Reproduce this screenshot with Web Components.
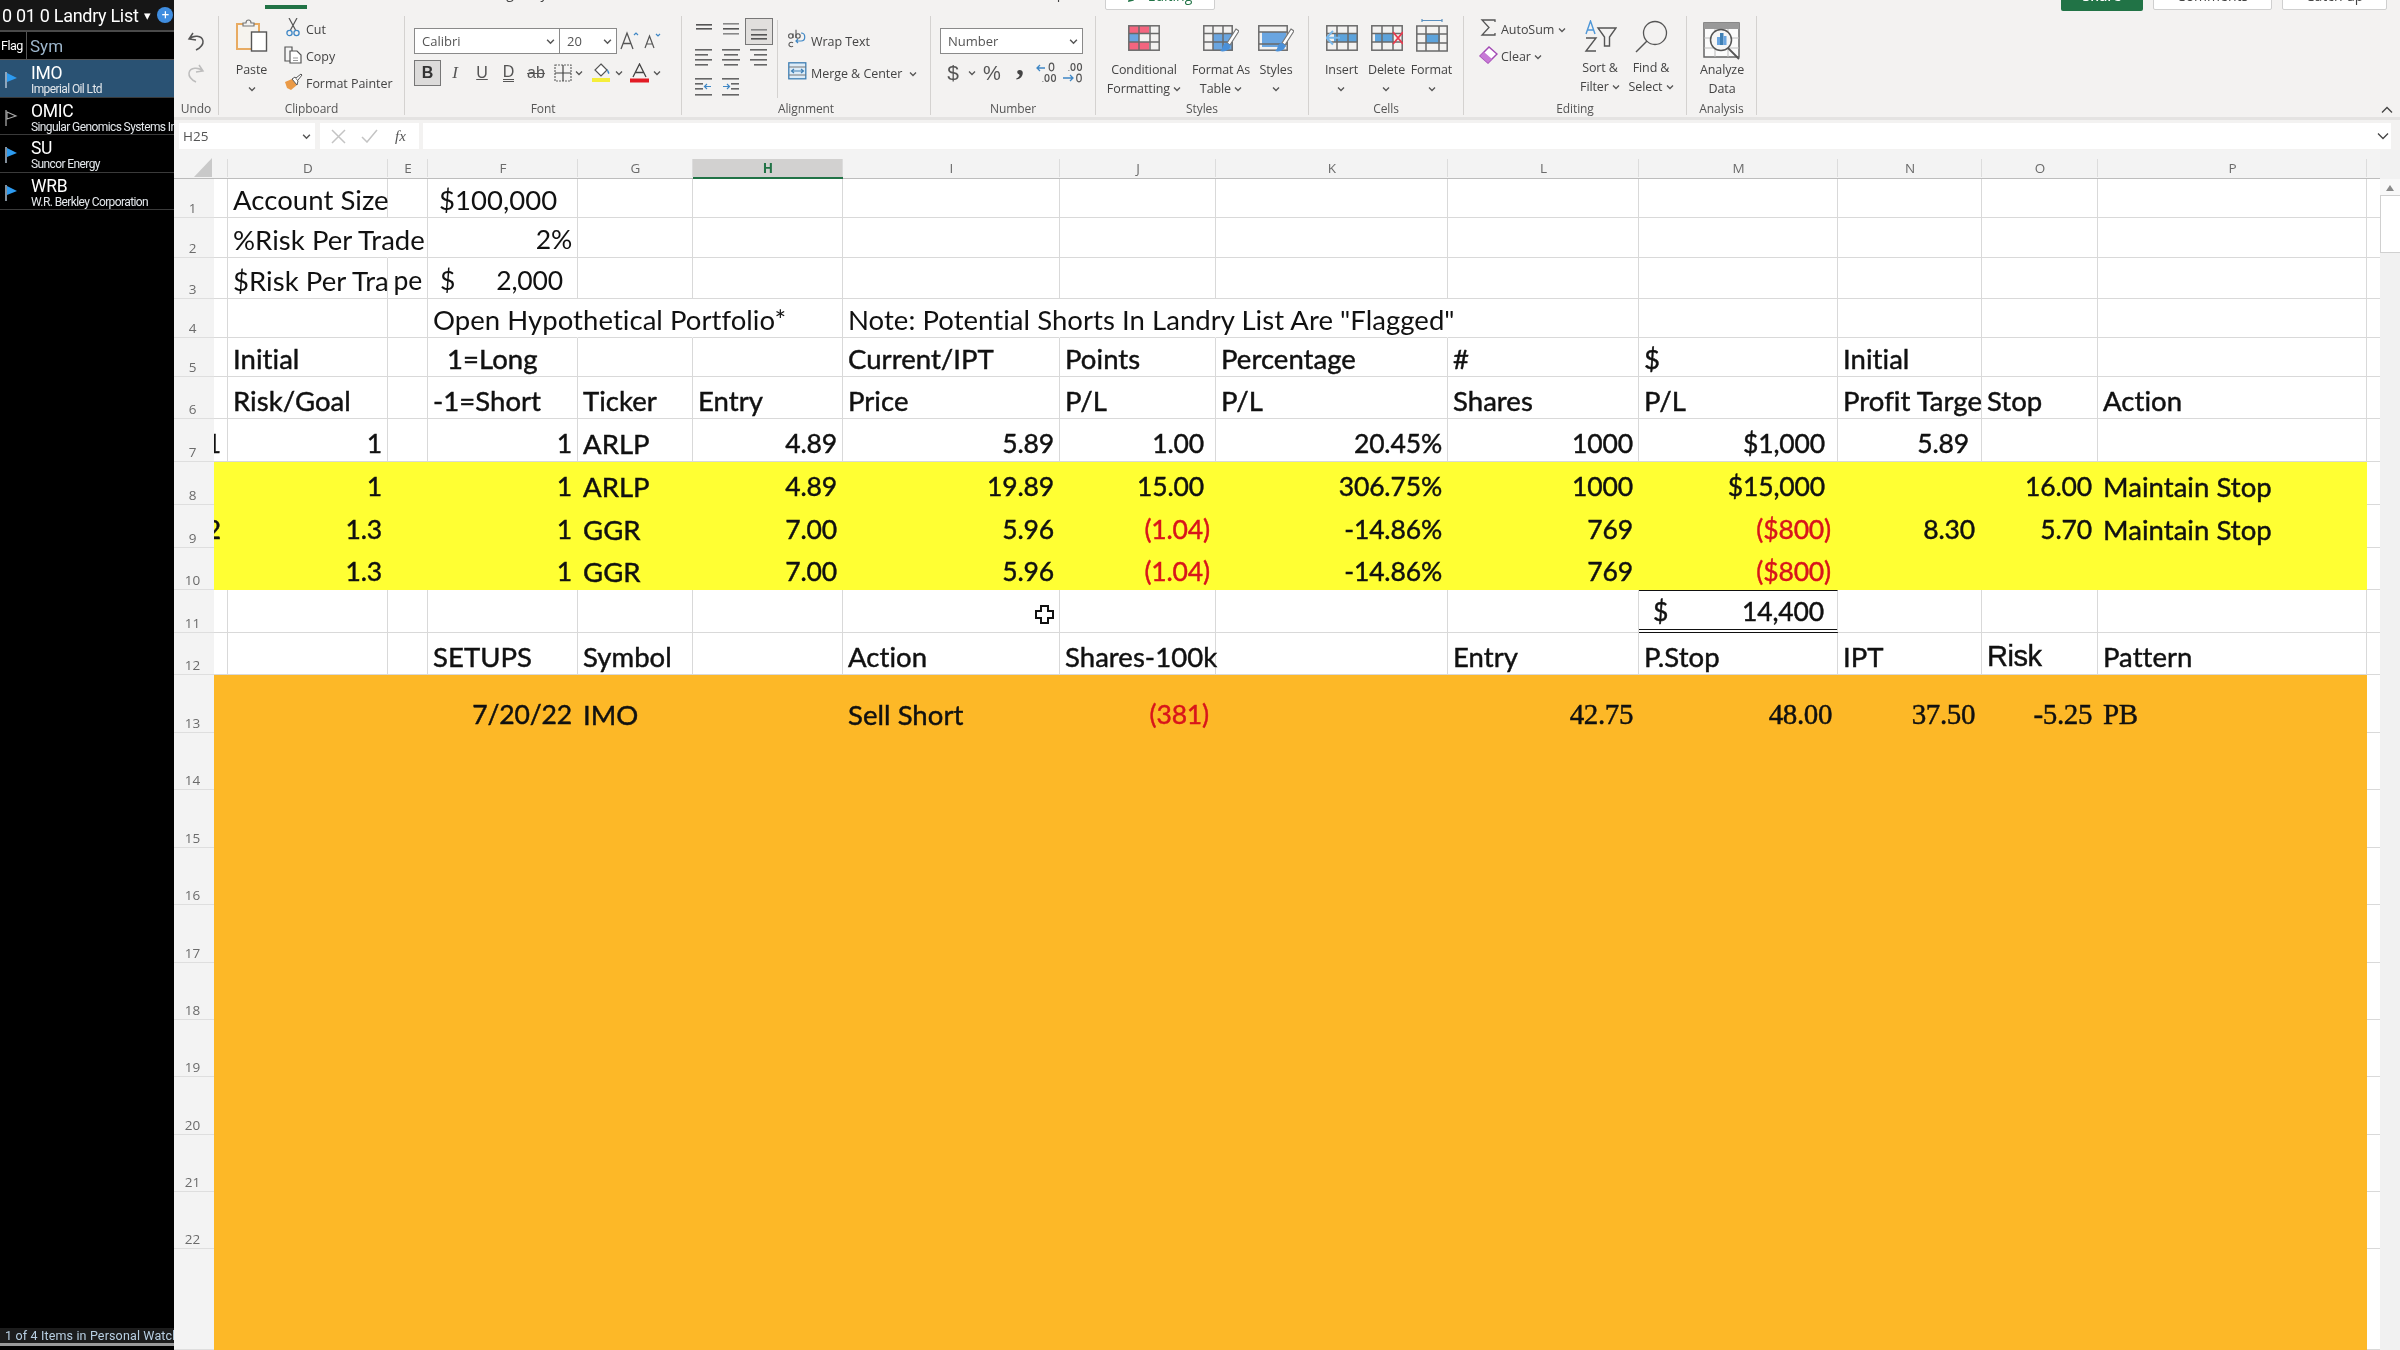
<!DOCTYPE html>
<html><head><meta charset="utf-8"><title>Landry List</title>
<style>
html,body{margin:0;padding:0;background:#f3f2f1;overflow:hidden}
xl-app{filter:blur(.45px)}
</style></head><body>
<xl-app>
  <wl-sidebar slot="side"></wl-sidebar>
  <xl-ribbon></xl-ribbon>
  <xl-formula></xl-formula>
  <xl-sheet></xl-sheet>
</xl-app>
<script>
const chev=(s=8,c='#555')=>`<svg width="${s}" height="${s}" viewBox="0 0 8 8"><path d="M1 2.500 4 5.500 7 2.500" fill="none" stroke="${c}" stroke-width="1.300"/></svg>`;
const tbl=(w,h,xs,ys,inner='',over='')=>`<svg width="${w}" height="${h}" viewBox="0 0 ${w} ${h}">${inner}<g fill="none" stroke="#6a6a6a" stroke-width="1.500"><rect x=".8" y=".8" width="${w-1.6}" height="${h-1.6}"/>${xs.map(x=>`<path d="M${x} 1V${h-1}"/>`).join('')}${ys.map(y=>`<path d="M1 ${y}H${w-1}"/>`).join('')}</g>${over}</svg>`;
const lines=(w,rows,c='#666')=>`<svg width="${w}" height="24" viewBox="0 0 ${w} 24">${rows.map(r=>`<rect x="${r[0]}" y="${r[1]}" width="${r[2]}" height="1.600" fill="${r[3]||c}"/>`).join('')}</svg>`;
const brush=`<path d="M29 3 32 5 23 19 20 17Z" fill="#fff" stroke="#777" stroke-width="1.200"/><path d="M19 17c4 0 5 4 3 6s-6 3-9 2c2-1 2-3 3-5 1-2 2-3 3-3Z" fill="#4a90d9"/>`;
const widen=s=>s.replace('width="30"','width="36"').replace('viewBox="0 0 30 26"','viewBox="0 0 36 30"').replace('height="26"','height="30"');
const ICONS={
undo:`<svg width="18" height="19" viewBox="0 0 18 19"><path d="M6 1 2 7l7 1M2.500 7C6 3 15 3 16 9c.5 4-3 7-7 9" fill="none" stroke="#555" stroke-width="1.500"/></svg>`,
redo:`<svg width="18" height="19" viewBox="0 0 18 19"><path d="M12 1l4 6-7 1M15.500 7C12 3 3 3 2 9c-.5 4 3 7 7 9" fill="none" stroke="#bdbdbd" stroke-width="1.500"/></svg>`,
paste:`<svg width="32" height="34" viewBox="0 0 32 34"><rect x="1" y="6" width="22" height="25" fill="#f6f3ee" stroke="#e8ab62" stroke-width="2"/><path d="M7 8V5h3c0-4 5-4 5 0h3v3Z" fill="#f3f2f1" stroke="#777" stroke-width="1.200"/><rect x="15.500" y="14" width="15" height="19" fill="#fff" stroke="#555" stroke-width="1.400"/></svg>`,
cut:`<svg width="14" height="19" viewBox="0 0 14 19"><path d="M3 0 9.500 12M11 0 4.500 12" stroke="#555" stroke-width="1.200" fill="none"/><circle cx="3.500" cy="15" r="2.600" fill="none" stroke="#3f87c5" stroke-width="1.300"/><circle cx="10.500" cy="15" r="2.600" fill="none" stroke="#3f87c5" stroke-width="1.300"/></svg>`,
copy:`<svg width="18" height="18" viewBox="0 0 18 18"><path d="M1 1h7v14H1Z" fill="#f5f5f5" stroke="#555" stroke-width="1.200"/><path d="M6 5h7l4 4v8H6Z" fill="#fff" stroke="#555" stroke-width="1.200"/><path d="M9 12h5M9 14.500h5" stroke="#999"/></svg>`,
painter:`<svg width="19" height="18" viewBox="0 0 19 18"><path d="M1 9 8 6l5 6-6 5-4-2Z" fill="#ea9a46"/><path d="M8 6l3-2 3 4-1 4Z" fill="#fff" stroke="#555"/><path d="M12 5l5-4 1 1-4 5" fill="#fff" stroke="#555"/></svg>`,
grow:`<svg width="20" height="20" viewBox="0 0 20 20"><path d="M1 18 7 2l6 16M3.500 12.500h7" fill="none" stroke="#555" stroke-width="1.300"/><path d="M14 4l2-2 2 2" fill="none" stroke="#3f87c5" stroke-width="1.200"/></svg>`,
shrink:`<svg width="18" height="18" viewBox="0 0 18 18"><path d="M1 16 5.500 4 10 16M2.800 12h5.400" fill="none" stroke="#555" stroke-width="1.200"/><path d="M12 2l2 2 2-2" fill="none" stroke="#3f87c5" stroke-width="1.200"/></svg>`,
border:`<svg width="18" height="18" viewBox="0 0 18 18"><g fill="none" stroke="#666" stroke-width="1.200"><rect x="1" y="1" width="16" height="16" stroke-dasharray="2 1"/><path d="M9 1v16M1 9h16" stroke="#444"/></g></svg>`,
fill:`<svg width="19" height="20" viewBox="0 0 19 20"><path d="M9 1 15 7l-6 6-6-6Z" fill="#fff" stroke="#555" stroke-width="1.200"/><path d="M15 6c2 2 3 4 2 5-1 0-2-2-2-5Z" fill="#3f87c5"/><rect x="0" y="15" width="18" height="4" fill="#f5ee3a"/></svg>`,
color:`<svg width="19" height="21" viewBox="0 0 19 21"><path d="M3 14 9.500 1 16 14M5.500 9.500h8" fill="none" stroke="#444" stroke-width="1.300"/><rect x="0" y="15.500" width="19" height="4" fill="#e21b25"/></svg>`,
wrap:`<svg width="20" height="20" viewBox="0 0 20 20"><g fill="none" stroke="#555" stroke-width="1.100"><circle cx="3.800" cy="7" r="2.200"/><path d="M6 4.500V9M9 .8V9"/><circle cx="11" cy="7" r="2.200"/><path d="M6 14a2.300 2.300 0 1 0 0 3"/></g><path d="M14 4c5 0 5 8 0 8H9m2-2-2 2 2 2" fill="none" stroke="#3f87c5" stroke-width="1.200"/></svg>`,
merge:`<svg width="19" height="18" viewBox="0 0 19 18"><rect x=".8" y=".8" width="17" height="16" fill="#dcecf8" stroke="#3f7fb4" stroke-width="1.300"/><path d="M1 5h17M1 13h17" stroke="#777"/><path d="M3 9h13M6 7 3.500 9 6 11M13 7l2.500 2L13 11" fill="none" stroke="#3f7fb4" stroke-width="1.200"/></svg>`,
inc:`<svg width="22" height="24" viewBox="0 0 22 24"><path d="M1 7h8M4 4 1 7l3 3" fill="none" stroke="#3f87c5" stroke-width="1.300"/><g fill="none" stroke="#555" stroke-width="1.200"><ellipse cx="15.500" cy="6" rx="2.300" ry="3.800"/><ellipse cx="11" cy="17" rx="2" ry="3.500"/><ellipse cx="17.500" cy="17" rx="2" ry="3.500"/><path d="M6.500 20.500h.8"/></g></svg>`,
dec:`<svg width="22" height="24" viewBox="0 0 22 24"><g fill="none" stroke="#555" stroke-width="1.200"><ellipse cx="11" cy="6" rx="2" ry="3.500"/><ellipse cx="17.500" cy="6" rx="2" ry="3.500"/><ellipse cx="17" cy="17" rx="2.300" ry="3.800"/><path d="M6.500 9.500h.8"/></g><path d="M1 17h10M8 14l3 3-3 3" fill="none" stroke="#3f87c5" stroke-width="1.300"/></svg>`,
cf:tbl(32,26,[11,22],[8.500,17],`<rect x="1" y="1" width="20" height="7.500" fill="#f4657f"/><rect x="1" y="8.500" width="10" height="8.500" fill="#6aa5e0"/><rect x="1" y="17" width="20" height="8" fill="#f4657f"/>`),
fat:widen(tbl(30,26,[10,20],[8.500,17],`<rect x="10" y="8.500" width="20" height="17" fill="#6aa5e0"/>`,`<g transform="translate(4 1)">${brush}</g>`)),
sty:widen(tbl(30,26,[],[7,19],`<rect x="4" y="7" width="24" height="15" fill="#6aa5e0"/>`,`<g transform="translate(4 1)">${brush}</g>`)),
ins:tbl(32,26,[11,22],[8.500,17],`<rect x="8" y="8.500" width="24" height="8.500" fill="#5da3dc"/>`,`<path d="M14 12.800H1M7 6 .5 12.800 7 19.500" fill="none" stroke="#7ab8ea" stroke-width="2"/>`),
del:tbl(32,26,[11,22],[8.500,17],`<rect x="4" y="8.500" width="18" height="8.500" fill="#5da3dc"/>`,`<path d="M22 7 32 19M32 7 22 19" stroke="#ea3a4f" stroke-width="1.800" fill="none"/>`),
fmt:`<svg width="32" height="33" viewBox="0 0 32 33"><path d="M6 1.500H26M6 0v3M26 0v3" stroke="#5a8fbe" stroke-width="1.200" fill="none"/><rect x="10" y="15" width="14" height="9" fill="#5da3dc"/><g fill="none" stroke="#6a6a6a" stroke-width="1.500"><rect x=".8" y="7" width="30.400" height="25"/><path d="M10 7v25M23 7v25M1 15h30M1 24h30"/></g></svg>`,
sum:`<svg width="17" height="17" viewBox="0 0 17 17"><path d="M15 3V1H2l7 7.500L2 16h13v-2" fill="none" stroke="#555" stroke-width="1.300"/></svg>`,
clear:`<svg width="19" height="18" viewBox="0 0 19 18"><path d="M1 10 10 1l8 7-9 9Z" fill="#fff" stroke="#a34ab5" stroke-width="1.500"/><path d="M1 10l4-4 8 7-4 4Z" fill="#c77ad6"/></svg>`,
sort:`<svg width="33" height="32" viewBox="0 0 33 32"><path d="M2 14 6.500 1 11 14M3.500 10h6" fill="none" stroke="#4e97d8" stroke-width="1.400"/><path d="M2 18h10L2 31h10" fill="none" stroke="#555" stroke-width="1.400"/><path d="M14 8h18l-6.500 9v9h-5v-9Z" fill="none" stroke="#555" stroke-width="1.400"/></svg>`,
find:`<svg width="33" height="33" viewBox="0 0 33 33"><circle cx="20" cy="13" r="11.500" fill="none" stroke="#555" stroke-width="1.300"/><path d="M12 21 1 32" stroke="#555" stroke-width="1.500"/></svg>`,
ana:`<svg width="38" height="38" viewBox="0 0 38 38"><rect x="1" y="1" width="35" height="34" fill="#fbfbfb" stroke="#666" stroke-width="1.500"/><rect x="1" y="1" width="35" height="6" fill="#999"/><path d="M1 16h35M1 26h35M12 7v28M25 7v28" stroke="#bbb"/><circle cx="18" cy="18" r="10.500" fill="#f5f5f5" stroke="#555" stroke-width="1.500"/><rect x="14" y="15" width="3" height="8" fill="#6aa5e0"/><rect x="17" y="11" width="3.500" height="12" fill="#3f7fb4"/><rect x="20.500" y="14" width="3" height="9" fill="#6aa5e0"/><path d="M25 26 36 37" stroke="#555" stroke-width="1.800"/></svg>`,
};
const alignIcons=[
 lines(20,[[2,7,16,'#555'],[2,11,16,'#555']]),
 lines(20,[[2,6,16,'#888'],[2,11,16,'#555'],[2,16,16,'#888']]),
 lines(20,[[2,9,16,'#888'],[2,14,16,'#555'],[2,18,16,'#555']]),
 lines(20,[[1,3,17],[1,8,13],[1,13,17],[1,18,13]]),
 lines(20,[[1,3,18],[3,8,14],[1,13,18],[3,18,14]]),
 lines(20,[[1,3,17],[5,8,13],[1,13,17],[5,18,13]]),
 lines(18,[[0,3,17],[0,8,8],[0,13,8],[0,19,17]])
   .replace('</svg>','<path d="M16 11.500h-6M12 9l-2.500 2.500L12 14" fill="none" stroke="#3f87c5" stroke-width="1.200"/></svg>'),
 lines(18,[[0,3,17],[9,8,8],[9,13,8],[0,19,17]])
   .replace('</svg>','<path d="M1 11.500h6M5 9l2.500 2.500L5 14" fill="none" stroke="#3f87c5" stroke-width="1.200"/></svg>'),
];

class Base extends HTMLElement{
  render(html){this.attachShadow({mode:'open'}).innerHTML=html}
}
customElements.define('xl-app',class extends Base{connectedCallback(){this.render(`<style>
:host{display:grid;grid-template-columns:174px 2226px;grid-template-rows:117px 3px 30px 1200px;width:2400px;height:1350px;overflow:hidden;background:#f3f2f1;color:#222;font-family:"Open Sans",sans-serif}
::slotted(wl-sidebar){grid-column:1;grid-row:1/5}
.m{grid-column:2;grid-row:1/5;display:flex;flex-direction:column;min-width:0}
</style><slot name="side"></slot><div class="m"><slot></slot></div>`)}});

customElements.define('wl-sidebar',class extends Base{connectedCallback(){
const flag=(on)=>on?`<svg width="14" height="18" viewBox="0 0 14 18"><path d="M2 1v16" stroke="#bcd" stroke-width="1.400"/><path d="M3 2 13 7 3 11Z" fill="#2d9bf0"/></svg>`:`<svg width="14" height="18" viewBox="0 0 14 18"><path d="M2 1v16" stroke="#999" stroke-width="1.400"/><path d="M3 3 12 7 3 10Z" fill="none" stroke="#aaa" stroke-width="1.100"/></svg>`;
const rows=[['IMO','Imperial Oil Ltd',1,1],['OMIC','Singular Genomics Systems Inc',0,0],['SU','Suncor Energy',1,0],['WRB','W.R. Berkley Corporation',1,0]];
this.render(`<style>
:host{display:flex;flex-direction:column;width:174px;height:1350px;background:#000;color:#fff;overflow:hidden;font-family:Roboto,sans-serif}
.title{height:30px;flex:none;background:#161616;display:flex;align-items:center;padding-left:2px;font-size:18px;letter-spacing:-.3px;white-space:nowrap;border-bottom:2px solid #4a4a4a}
.title i{font-style:normal;font-size:13px;margin-left:5px}
.plus{margin-left:7px;width:16px;height:16px;border-radius:50%;background:#3f8de0;color:#fff;font-size:13px;line-height:16px;text-align:center;flex:none}
.hd{height:28px;flex:none;display:flex;align-items:center;border-bottom:1px solid #555;box-sizing:border-box}
.hd b{font-weight:400;width:27px;font-size:12.500px;letter-spacing:-.5px;padding-left:1px;box-sizing:border-box;height:100%;line-height:28px;border-right:1.500px solid #555}
.hd span{padding-left:3px;font-size:17px;color:#9db6cc}
.r{height:37.500px;flex:none;display:flex;border-bottom:1.500px solid #3a3a3a;box-sizing:border-box;overflow:hidden}
.r.s{background:#2a5273}
.f{width:30px;flex:none;padding:11px 0 0 4px;box-sizing:border-box}
.t{padding-left:1px;white-space:nowrap;display:flex;flex-direction:column}
.t b{font-weight:400;font-size:17.500px;line-height:20px;margin-top:3px;letter-spacing:-.3px}
.t small{font-size:12px;line-height:12px;letter-spacing:-.6px;color:#e4e8ec}
.sp{flex:1}
.st{flex:none;height:15px;background:#1c1c1c;font-size:12.500px;line-height:15px;color:#b8cfe2;padding-left:5px;white-space:nowrap;overflow:hidden;letter-spacing:.15px}
.ln{flex:none;height:3px;background:#9a9a9a;margin-bottom:4px}
</style>
<div class="title">0 01 0 Landry List<i>▾</i><span class="plus">+</span></div>
<div class="hd"><b>Flag</b><span>Sym</span></div>
${rows.map(r=>`<div class="r ${r[3]?'s':''}"><div class="f">${flag(r[2])}</div><div class="t"><b>${r[0]}</b><small>${r[1]}</small></div></div>`).join('')}
<div class="sp"></div>
<div class="st">1 of 4 Items in Personal Watch</div><div class="ln"></div>`)}});

customElements.define('rb-group',class extends Base{connectedCallback(){
this.render(`<style>
:host{display:flex;flex-direction:column;flex:none;height:101px;box-sizing:border-box;width:var(--w);position:relative}
.c{height:85px;display:flex;box-sizing:border-box;padding-left:var(--p,0)}
.l{height:16px;line-height:16px;text-align:center;font-size:12px;color:#555;letter-spacing:-.1px;padding-right:1px}
.sep{position:absolute;right:0;top:0;bottom:2px;width:1.500px;background:#d4d2d0}
</style><div class="c"><slot></slot></div><div class="l">${this.getAttribute('label')}</div><div class="sep"></div>`)}});

customElements.define('rb-big',class extends Base{connectedCallback(){
const t=this.hasAttribute('short');
this.render(`<style>
:host{display:flex;flex-direction:column;align-items:center;flex:none;width:var(--w,50px);font-size:12.500px;line-height:19px;color:#444;white-space:nowrap;text-align:center;letter-spacing:-.1px}
.i{height:${t?36:38}px;margin-top:${t?4:2}px;margin-bottom:${t?2:4}px;display:flex;align-items:flex-start;justify-content:center;flex:none}
</style><div class="i"><slot name="icon"></slot></div><div><slot></slot></div>`)}});

customElements.define('rb-small',class extends Base{connectedCallback(){
this.render(`<style>
:host{display:flex;align-items:center;height:var(--h,27px);font-size:12.500px;color:#444;white-space:nowrap;gap:4px;letter-spacing:-.05px}
.i{width:var(--iw,18px);display:flex;justify-content:center;flex:none}
</style><div class="i"><slot name="icon"></slot></div><div><slot></slot></div>`)}});

customElements.define('xl-ribbon',class extends Base{connectedCallback(){
const ib=(w,c,s='')=>`<span style="width:${w}px;display:flex;justify-content:center;align-items:center;flex:none;${s}">${c}</span>`;
this.render(`<style>
:host{display:block;height:120px;width:2226px;background:#f3f2f1;box-sizing:border-box;border-bottom:3px solid #e4e3e2;overflow:hidden;font-family:"Open Sans",sans-serif}
.strip{height:16px;display:flex;overflow:hidden}
.tab{flex:none;font-size:14px;line-height:20px;height:20px;margin-top:-17px;white-space:nowrap;color:#444}
.ul{flex:none;height:4px;width:42px;margin:5px 0 0 91px;background:#217346}
.pill{flex:none;height:30px;margin-top:-20px;box-sizing:border-box;border:1px solid #cfcfcf;border-radius:2px;background:#fff;display:flex;align-items:center;justify-content:center;gap:6px;font-size:14px;color:#217346}
.share{background:#217346;color:#fff;border:0;height:31px;font-weight:600}
.pill.g{color:#444}
.rb{display:flex;height:101px}
.col{display:flex;flex-direction:column}
.box{box-sizing:border-box;height:26px;background:#fff;border:1.500px solid #8a8a8a;display:flex;align-items:center;justify-content:space-between;font-size:13px;color:#555;padding:0 4px 0 7px}
.row{display:flex;align-items:center;height:26px;color:#555}
.btn{font-family:"Liberation Sans",sans-serif;font-size:16px}
.grid{display:grid;grid-template-columns:repeat(3,27.500px);grid-auto-rows:29px;margin-top:-2px}
.grid span{display:flex;align-items:center;justify-content:center;box-sizing:border-box}
.grid .on{background:#e1dfdd;border:1.500px solid #777;margin:4px 0 -1px;height:27px}
.v{width:1.500px;background:#d4d2d0;height:78px;margin:4px 0 0 4px;flex:none}
.end{flex:1;display:flex;align-items:flex-end;justify-content:flex-end;padding:0 7px 3px 0}
</style>
<div class="strip">
 <div class="ul"></div>
 <div class="tab" style="margin-left:183px;width:100px">Page Layout</div>
 <div class="tab" style="margin-left:445px;width:35px">Help</div>
 <div class="pill" style="margin-left:35px;width:110px"><svg width="14" height="14" viewBox="0 0 14 14"><path d="M1 13l1-4 8-8 3 3-8 8Z" fill="none" stroke="#217346" stroke-width="1.500"/></svg>Editing</div>
 <div class="pill share" style="margin-left:846px;width:82px">Share</div>
 <div class="pill g" style="margin-left:10px;width:119px">Comments</div>
 <div class="pill g" style="margin-left:10px;width:105px">Catch up</div>
</div>
<div class="rb">
 <rb-group label="Undo" style="--w:45px"><div class="col" style="width:45px;align-items:center;padding-top:16px;gap:13px;padding-right:1px;box-sizing:border-box">${ICONS.undo}${ICONS.redo}</div></rb-group>
 <rb-group label="Clipboard" style="--w:186px">
  <rb-big style="--w:65px"><span slot="icon">${ICONS.paste}</span>Paste<br>${chev()}</rb-big>
  <div class="col" style="--iw:18px">
   <rb-small><span slot="icon">${ICONS.cut}</span>Cut</rb-small>
   <rb-small><span slot="icon">${ICONS.copy}</span>Copy</rb-small>
   <rb-small><span slot="icon">${ICONS.painter}</span>Format Painter</rb-small>
  </div>
 </rb-group>
 <rb-group label="Font" style="--w:277px;--p:9px">
  <div class="col" style="padding-top:12px;gap:6px">
   <div class="row">
    <div class="box" style="width:145px;border-right:0"><span>Calibri</span>${chev(9)}</div>
    <div class="box" style="width:58px"><span>20</span>${chev(9)}</div>
    ${ib(26,ICONS.grow)}${ib(20,ICONS.shrink)}
   </div>
   <div class="row">
    <div class="box btn" style="width:27px;background:#dcdbda;border-color:#777;justify-content:center;padding:0;font-weight:700;color:#333">B</div>
    ${ib(28,'<i style="font-family:Liberation Serif;font-size:17px">I</i>')}
    ${ib(26,'<u class="btn">U</u>')}
    ${ib(27,'<span class="btn" style="border-bottom:3px double #555;line-height:15px">D</span>')}
    ${ib(28,'<s class="btn">ab</s>')}
    ${ib(18,ICONS.border,'margin-left:4px')}${ib(14,chev())}
    ${ib(19,ICONS.fill,'margin-left:6px')}${ib(16,chev())}
    ${ib(19,ICONS.color,'margin-left:3px')}${ib(16,chev())}
   </div>
  </div>
 </rb-group>
 <rb-group label="Alignment" style="--w:249px;--p:8px">
  <div class="grid">
   <span>${alignIcons[0]}</span><span>${alignIcons[1]}</span><span class="on">${alignIcons[2]}</span>
   <span>${alignIcons[3]}</span><span>${alignIcons[4]}</span><span>${alignIcons[5]}</span>
   <span>${alignIcons[6]}</span><span>${alignIcons[7]}</span><span></span>
  </div>
  <div class="v"></div>
  <div class="col" style="margin-left:9px;padding-top:9px;--iw:20px;--h:32px">
   <rb-small><span slot="icon">${ICONS.wrap}</span>Wrap Text</rb-small>
   <rb-small><span slot="icon">${ICONS.merge}</span>Merge &amp; Center &nbsp;${chev()}</rb-small>
  </div>
 </rb-group>
 <rb-group label="Number" style="--w:165px;--p:9px">
  <div class="col" style="padding-top:12px;gap:6px">
   <div class="box" style="width:143px"><span>Number</span>${chev(9)}</div>
   <div class="row">
    ${ib(26,'<span class="btn" style="font-size:21px">$</span>')}${ib(12,chev())}
    ${ib(28,'<span class="btn" style="font-size:20px">%</span>')}
    ${ib(28,'<span style="font:700 32px Liberation Serif;line-height:24px;transform:translateY(-9px);color:#444">,</span>')}
    ${ib(26,ICONS.inc)}${ib(26,ICONS.dec)}
   </div>
  </div>
 </rb-group>
 <rb-group label="Styles" style="--w:213px">
  <rb-big style="--w:96px"><span slot="icon" style="display:block;margin-top:7px">${ICONS.cf}</span>Conditional<br>Formatting ${chev()}</rb-big>
  <rb-big style="--w:58px"><span slot="icon" style="display:block;margin-top:7px">${ICONS.fat}</span>Format As<br>Table ${chev()}</rb-big>
  <rb-big style="--w:52px"><span slot="icon" style="display:block;margin-top:7px">${ICONS.sty}</span>Styles<br>${chev()}</rb-big>
 </rb-group>
 <rb-group label="Cells" style="--w:155px;--p:10px">
  <rb-big style="--w:45px"><span slot="icon" style="display:block;margin-top:7px">${ICONS.ins}</span>Insert<br>${chev()}</rb-big>
  <rb-big style="--w:45px"><span slot="icon" style="display:block;margin-top:7px">${ICONS.del}</span>Delete<br>${chev()}</rb-big>
  <rb-big style="--w:45px"><span slot="icon" style="display:block;margin-top:1px">${ICONS.fmt}</span>Format<br>${chev()}</rb-big>
 </rb-group>
 <rb-group label="Editing" style="--w:223px;--p:15px">
  <div class="col" style="width:90px;flex:none">
   <rb-small><span slot="icon">${ICONS.sum}</span>AutoSum ${chev()}</rb-small>
   <rb-small><span slot="icon">${ICONS.clear}</span>Clear ${chev()}</rb-small>
  </div>
  <rb-big short style="--w:62px"><span slot="icon">${ICONS.sort}</span>Sort &amp;<br>Filter ${chev()}</rb-big>
  <rb-big short style="--w:40px"><span slot="icon">${ICONS.find}</span>Find &amp;<br>Select ${chev()}</rb-big>
 </rb-group>
 <rb-group label="Analysis" style="--w:70px">
  <rb-big style="--w:70px"><span slot="icon" style="display:block;margin-top:4px">${ICONS.ana}</span>Analyze<br>Data</rb-big>
 </rb-group>
 <div class="end"><svg width="12" height="8" viewBox="0 0 12 8"><path d="M1 6.500 6 1.500l5 5" fill="none" stroke="#444" stroke-width="1.300"/></svg></div>
</div>`)}});

customElements.define('xl-formula',class extends Base{connectedCallback(){
this.render(`<style>
:host{display:flex;height:30px;width:2226px;box-sizing:border-box;padding:3px 0 1px 5px;background:#f3f2f1;font-family:"Open Sans",sans-serif}
div{background:#fff;height:26px;display:flex;align-items:center;flex:none;box-sizing:border-box}
.n{width:136px;padding:0 4px 0 4px;justify-content:space-between;font-size:13.500px;color:#555}
.b{width:99px;margin-left:5px;padding-left:3px;gap:0}
.b span{width:31px;display:flex;justify-content:center;flex:none}
.f{width:1968px;margin-left:4px;justify-content:flex-end;padding-right:2px}
</style>
<div class="n">H25 ${chev(9)}</div>
<div class="b"><span><svg width="15" height="15" viewBox="0 0 15 15"><path d="M1 1 14 14M14 1 1 14" stroke="#c4c4c4" stroke-width="1.500"/></svg></span><span><svg width="17" height="14" viewBox="0 0 17 14"><path d="M1 8 6 13 16 1" fill="none" stroke="#c4c4c4" stroke-width="1.500"/></svg></span><span style="font:italic 15px 'Liberation Serif';color:#555">fx</span></div>
<div class="f"><svg width="12" height="8" viewBox="0 0 12 8"><path d="M1 1.500 6 6.500l5-5" fill="none" stroke="#444" stroke-width="1.300"/></svg></div>`)}});

customElements.define('xl-sheet',class extends Base{connectedCallback(){
const cols=['C','D','E','F','G','H','I','J','K','L','M','N','O','P'];
const colW=[14,160,40,150,115,150,217,156,232,191,199,144,116,269];
const rowH=[39,40,41,39,39,42,43,43,43,42,43,42,58,57,58,57,58,57,57,58,57,57,0];
rowH[22]=1350-150-29-rowH.slice(0,22).reduce((a,b)=>a+b,0);
const R=(t,o={})=>({t,a:'r',...o}), L=(t,o={})=>({t,a:'l',...o});
const red={c:'#d8151b'};
const D={
1:{D:L('Account Size'),F:L('$100,000',{pl:11})},
2:{D:L('%Risk Per Trade',{nb:1}),F:R('2%')},
3:{D:L('$Risk Per Tra',{clip:1}),E:R('pe',{clip:1}),F:{a:'b',t:'$',t2:'2,000',pl:12,pr:14}},
4:{F:L('Open Hypothetical Portfolio*',{nb:1}),G:{a:'l',t:'',nb:1},I:L('Note: Potential Shorts In Landry List Are "Flagged"',{nb:1}),J:{a:'l',t:'',nb:1},K:{a:'l',t:'',nb:1}},
5:{D:L('Initial'),F:L('1=Long',{pl:19}),I:L('Current/IPT'),J:L('Points'),K:L('Percentage'),L:L('#'),M:L('$'),N:L('Initial')},
6:{D:L('Risk/Goal'),F:L('-1=Short'),G:L('Ticker'),H:L('Entry'),I:L('Price'),J:L('P/L'),K:L('P/L'),L:L('Shares'),M:L('P/L'),N:L('Profit Targe',{clip:1}),O:L('Stop'),P:L('Action')},
7:{C:R('1',{clip:1,pr:6}),D:R('1'),F:R('1'),G:L('ARLP'),H:R('4.89'),I:R('5.89'),J:R('1.00',{pr:11}),K:R('20.45%'),L:R('1000'),M:R('$1,000',{pr:12}),N:R('5.89',{pr:12})},
8:{D:R('1'),F:R('1'),G:L('ARLP'),H:R('4.89'),I:R('19.89'),J:R('15.00',{pr:11}),K:R('306.75%'),L:R('1000'),M:R('$15,000',{pr:12}),O:R('16.00'),P:L('Maintain Stop')},
9:{C:R('2',{clip:1,pr:6}),D:R('1.3'),F:R('1'),G:L('GGR'),H:R('7.00'),I:R('5.96'),J:R('(1.04)',{pr:5,...red}),K:R('-14.86%'),L:R('769'),M:R('($800)',{pr:6,...red}),N:R('8.30',{pr:6}),O:R('5.70'),P:L('Maintain Stop')},
10:{D:R('1.3'),F:R('1'),G:L('GGR'),H:R('7.00'),I:R('5.96'),J:R('(1.04)',{pr:5,...red}),K:R('-14.86%'),L:R('769'),M:R('($800)',{pr:6,...red})},
11:{M:{a:'b',t:'$',t2:'14,400',pl:14,pr:13,tot:1}},
12:{F:L('SETUPS'),G:L('Symbol'),I:L('Action'),J:L('Shares-100k'),L:L('Entry'),M:L('P.Stop'),N:L('IPT'),O:L('Risk',{arial:1}),P:L('Pattern')},
13:{F:R('7/20/22'),G:L('IMO'),I:L('Sell Short'),J:R('(381)',{pr:6,...red}),L:R('42.75',{ser:1}),M:R('48.00',{ser:1}),N:R('37.50',{ser:1,pr:6}),O:R('-5.25',{ser:1}),P:L('PB',{ser:1})},
};
let h=`<div class="cor"><svg width="18" height="19" viewBox="0 0 18 19"><path d="M18 0V19H0Z" fill="#c9c9c9"/></svg></div>`;
cols.forEach(c=>{h+=`<div class="ch ${c=='H'?'on':''}">${c=='C'?'':c}</div>`});
h+=`<div class="ch tl"></div>`;
rowH.forEach((_,i)=>{
 const r=i+1, fill=(r>=8&&r<=10)?'y':(r>=13?'o':'');
 const bold=r>=5;
 h+=`<div class="rh"><span>${r<=22?r:''}</span></div>`;
 cols.forEach(c=>{
  const d=(D[r]||{})[c];
  let cl=`c ${fill} ${bold?'bd':''}`,st='',inner='';
  if(d){
   if(d.clip)cl+=' clip'; if(d.nb)cl+=' nb'; if(d.ser)cl+=' ser'; if(d.arial)cl+=' ari'; if(d.tot)cl+=' tot';
   if(d.a=='r')cl+=' r'; if(d.a=='l')cl+=' tx'; if(d.a=='b')cl+=' sb';
   if(d.pl!=null)st+=`padding-left:${d.pl}px;`; if(d.pr!=null)st+=`padding-right:${d.pr}px;`; if(d.c)st+=`color:${d.c};`;
   inner=`<span>${d.t}</span>`+(d.t2?`<span>${d.t2}</span>`:'');
  }
  h+=`<div class="${cl}" style="${st}">${inner}</div>`;
 });
 h+=`<div class="c tl"></div>`;
});
this.render(`<style>
:host{display:flex;width:2226px;height:1200px;background:#fff;overflow:hidden;position:relative;font-family:Lato,sans-serif}
.g{display:grid;grid-template-columns:40px ${colW.map(w=>w+'px').join(' ')} 13px;grid-template-rows:29px ${rowH.map(x=>x+'px').join(' ')};width:2206px;flex:none;font-size:26.500px;color:#111}
.cor{background:#f3f3f3;display:flex;align-items:flex-end;justify-content:flex-end;padding:0 2px 1px 0;border-bottom:1px solid #bbb;box-sizing:border-box}
.ch{background:#f3f3f3;box-sizing:border-box;border-bottom:1.500px solid #bdbdbd;font:13.500px/20px "Open Sans",sans-serif;color:#6b6b6b;text-align:center;padding-top:8px;position:relative}
.ch:not(.tl)::after{content:"";position:absolute;right:0;top:9px;bottom:1px;width:1px;background:#dcdcdc}
.ch.on{background:linear-gradient(#f3f3f3 9px,#d2d1d0 9px);color:#217346;font-weight:700;border-bottom:2px solid #217346}
.rh{background:#f3f3f3;border-bottom:1px solid #dedede;display:flex;align-items:flex-end;justify-content:center;font:13.500px/18px "Open Sans",sans-serif;color:#6b6b6b;padding:0 3px 0 0;box-sizing:border-box}
.c{box-sizing:border-box;border-right:1.500px solid #d9d9d9;border-bottom:1.500px solid #d9d9d9;display:flex;align-items:flex-end;line-height:35px;padding:0 5px;white-space:nowrap;min-width:0;letter-spacing:-.15px}
.c.tx{font-size:27.500px;letter-spacing:.05px}
.c.r{justify-content:flex-end}
.c.sb{justify-content:space-between}
.c.clip{overflow:hidden}
.c.nb{border-right-color:transparent}
.bd{-webkit-text-stroke:.45px currentColor}
.y{background:#ffff33;border-color:#ffff33}
.o{background:#fdb827;border-color:#fdb827}
.c.ser{font-family:"Liberation Serif",serif;font-size:29px;letter-spacing:-.4px}
.c.ari{font-family:"Liberation Sans",sans-serif;font-size:29px;letter-spacing:-.5px}
.tot{border-top:1.500px solid #111;border-bottom:4px double #111}
.tl{border-right:0}
.sc{width:20px;flex:none;background:#f1f1f1;padding-top:29px;box-sizing:content-box;display:flex;flex-direction:column;align-items:stretch}
.sc .up{height:16px;display:flex;align-items:center;justify-content:center;background:#f8f8f8;padding-top:2px;box-sizing:border-box}
.sc .th{height:58px;background:#fff;border:1px solid #d0d0d0;border-width:1px 0 1px 1px;box-sizing:border-box}
.cur{position:absolute;left:861px;top:455px}
</style><div class="g">${h}</div>
<div class="sc"><div class="up"><svg width="8" height="6" viewBox="0 0 8 6"><path d="M4 0 8 6H0Z" fill="#8a8a8a"/></svg></div><div class="th"></div></div>
<svg class="cur" width="19" height="19" viewBox="0 0 19 19"><path d="M6 1h7v5h5v7h-5v5H6v-5H1V6h5Z" fill="#fff" stroke="#111" stroke-width="2"/></svg>`)}});
</script>
</body></html>
